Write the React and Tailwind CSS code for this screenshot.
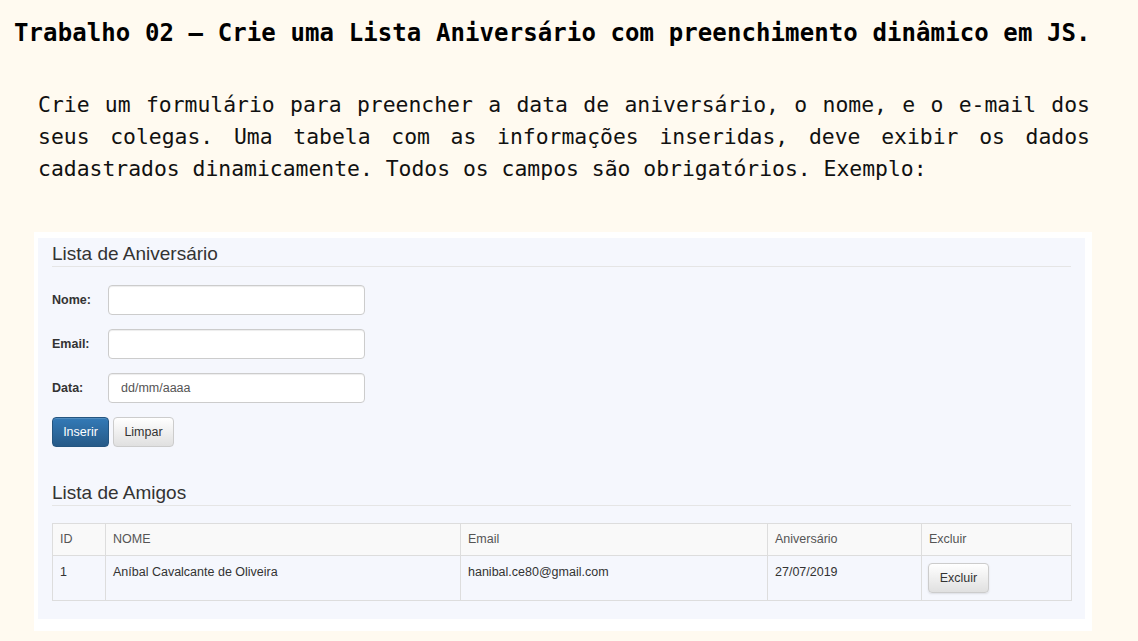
import React from 'react'

const mono = "font-['DejaVu_Sans_Mono','Liberation_Mono',monospace]"

const FieldRow = ({ label, placeholder }) => (
  <div className="flex items-center h-[30px]">
    <label className="w-[56px] text-[12.5px] font-bold text-[#333]">{label}</label>
    <input
      className="w-[257px] h-[30px] px-[12px] bg-white border border-[#ccc] rounded-[4px] shadow-[inset_0_1px_1px_rgba(0,0,0,0.075)] text-[12.5px] text-[#555] placeholder:text-[#555] outline-none"
      placeholder={placeholder}
      readOnly
    />
  </div>
)

const Heading = ({ children }) => (
  <h2 className="text-[19px] leading-[20px] pb-[2px] border-b border-[#e5e5e5] text-[#333]">
    {children}
  </h2>
)

const th = 'border border-[#ddd] px-[7px] py-[7px] leading-[17px] font-normal text-left'
const td = 'border border-[#ddd] px-[7px] py-[8px] leading-[17px] align-top'

const App = () => {
  return (
    <div className="w-full h-[641px] overflow-hidden bg-[#fffaf0] font-['Liberation_Sans',Arial,sans-serif]">
      <h1 className={`${mono} pl-[14px] pt-[17px] text-[24px] leading-[32px] font-bold tracking-[0.1px] text-black whitespace-nowrap`}>
        Trabalho 02 – Crie uma Lista Aniversário com preenchimento dinâmico em JS.
      </h1>

      <p className={`${mono} mt-[40px] ml-[38px] w-[1052px] text-justify text-[21.4px] leading-[32px] text-[#111]`}>
        Crie um formulário para preencher a data de aniversário, o nome, e o e-mail dos seus colegas. Uma tabela com as informações inseridas, deve exibir os dados cadastrados dinamicamente. Todos os campos são obrigatórios. Exemplo:
      </p>

      {/* screenshot of the example page */}
      <div className="mt-[47px] ml-[34px] w-[1058px] h-[399px] bg-white pt-[6px] pl-[4px]">
        <div className="w-[1047px] h-[381px] bg-[#f5f7fd] px-[14px] pt-[6px]">
          <Heading>Lista de Aniversário</Heading>

          <div className="mt-[18px] flex flex-col gap-[14px]">
            <FieldRow label="Nome:" />
            <FieldRow label="Email:" />
            <FieldRow label="Data:" placeholder="dd/mm/aaaa" />
          </div>

          <div className="mt-[14px] flex gap-[4px]">
            <button className="w-[57px] h-[30px] rounded-[4px] border border-[#245580] bg-gradient-to-b from-[#337ab7] to-[#265a88] text-white text-[12.5px] shadow-[inset_0_1px_0_rgba(255,255,255,0.15)]">
              Inserir
            </button>
            <button className="w-[61px] h-[30px] rounded-[4px] border border-[#ccc] bg-gradient-to-b from-white to-[#e0e0e0] text-[#333] text-[12.5px]">
              Limpar
            </button>
          </div>

          <div className="mt-[36px]">
            <Heading>Lista de Amigos</Heading>
          </div>

          <table className="mt-[17px] w-[1020px] table-fixed border-collapse border border-[#ddd] text-[12.5px] text-[#333]">
            <thead>
              <tr className="bg-[#f9f9f9] text-[#555]">
                <th className={`w-[53px] ${th}`}>ID</th>
                <th className={`w-[355px] ${th}`}>NOME</th>
                <th className={`w-[307px] ${th}`}>Email</th>
                <th className={`w-[154px] ${th}`}>Aniversário</th>
                <th className={`w-[150px] ${th}`}>Excluir</th>
              </tr>
            </thead>
            <tbody>
              <tr>
                <td className={td}>1</td>
                <td className={td}>Aníbal Cavalcante de Oliveira</td>
                <td className={td}>hanibal.ce80@gmail.com</td>
                <td className={td}>27/07/2019</td>
                <td className="border border-[#ddd] px-[6px] py-[7px] align-top">
                  <button className="block w-[61px] h-[30px] rounded-[4px] border border-[#ccc] bg-gradient-to-b from-white to-[#e0e0e0] text-[#333] text-[12.5px] shadow-[0_1px_2px_rgba(0,0,0,0.1)]">
                    Excluir
                  </button>
                </td>
              </tr>
            </tbody>
          </table>
        </div>
      </div>
    </div>
  )
}

export default App
